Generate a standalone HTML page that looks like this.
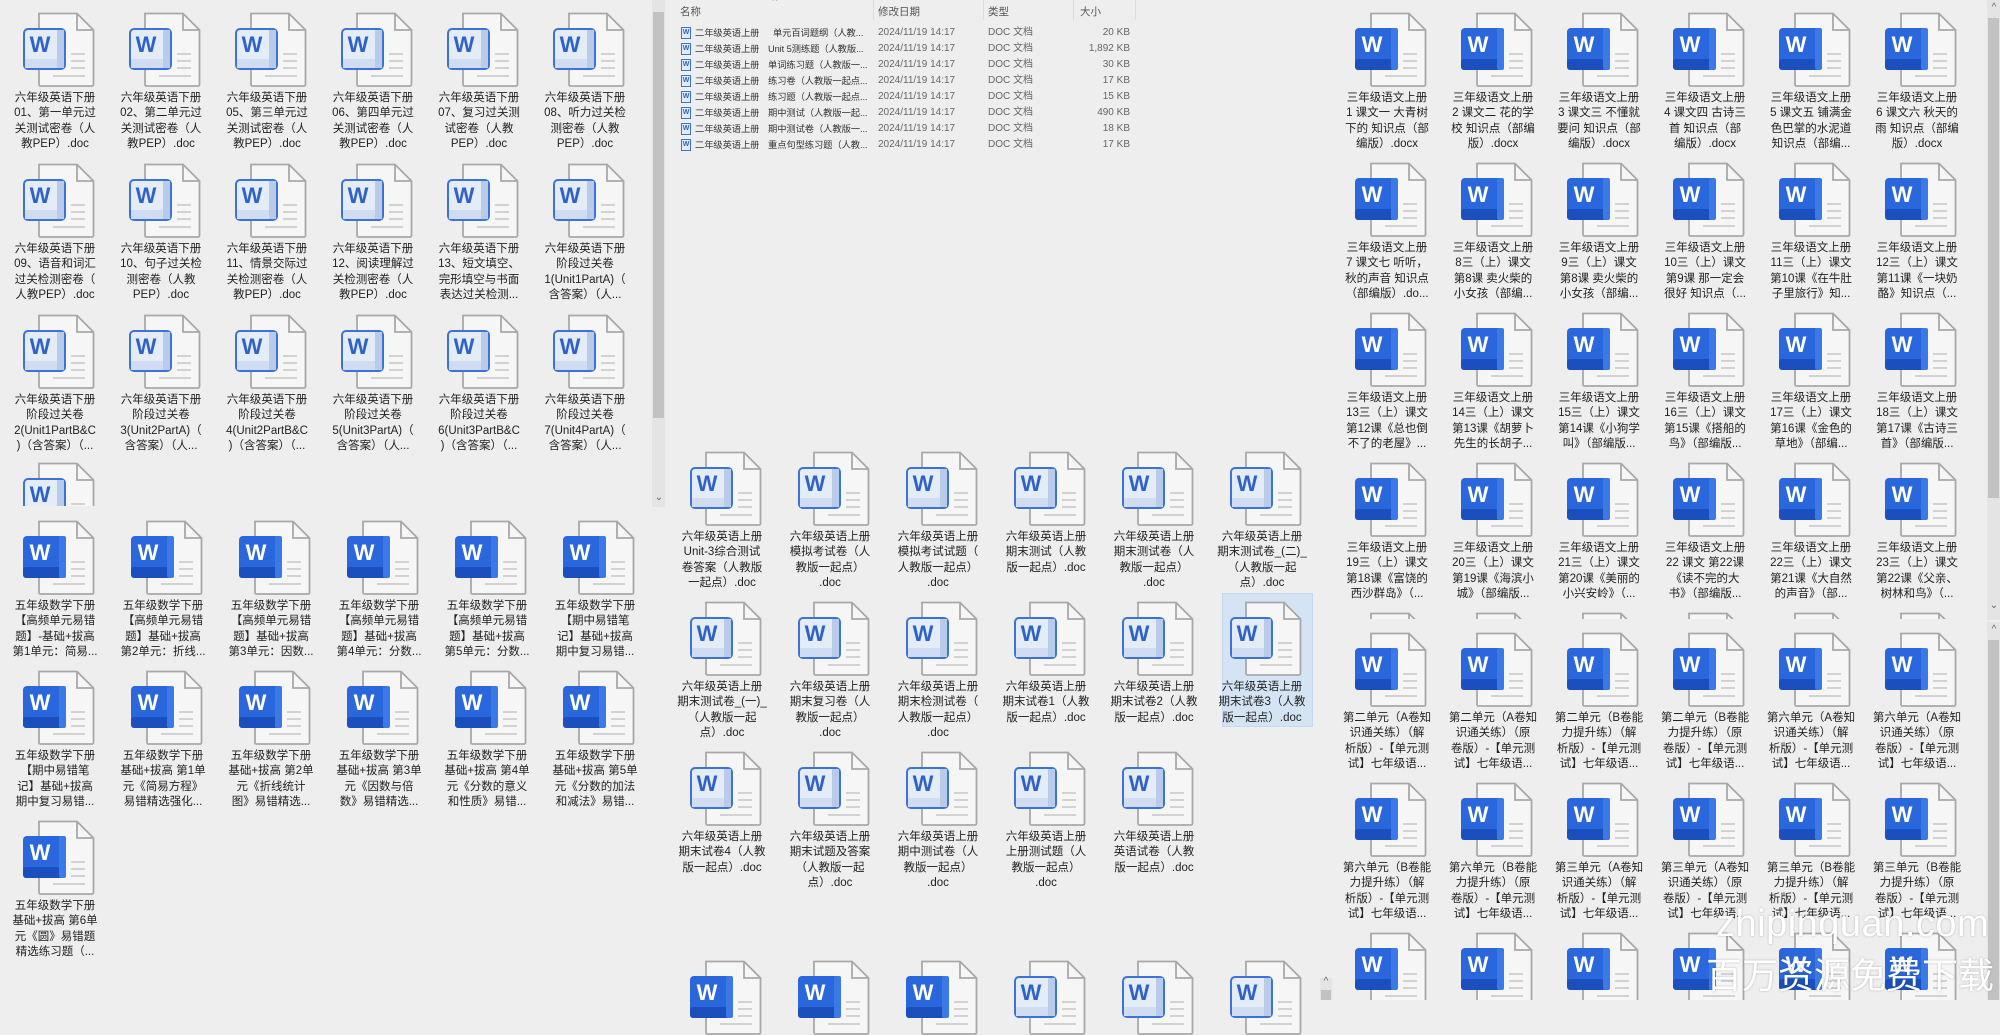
<!DOCTYPE html>
<html><head><meta charset="utf-8">
<style>
*{margin:0;padding:0;box-sizing:border-box}
body{width:2000px;height:1000px;overflow:hidden;background:#eeeeee;font-family:"Liberation Sans","Noto Sans CJK SC",sans-serif;position:relative}
.p{position:absolute;overflow:hidden;background:#eeeeee}
.it{position:absolute;width:100px;text-align:center;font-size:11.5px;line-height:15.3px;color:#222;white-space:nowrap}
.it svg{display:block;margin-left:18px;width:72px;height:75px}
.it .t{margin-top:4px}
.sb{position:absolute;background:#e4e4e4}
.th{position:absolute;background:#c2c2c2}
.ar{position:absolute;font-size:10px;color:#666;width:14px;text-align:center}
.lr{position:absolute;font-size:10px;color:#333;white-space:nowrap;height:16px;line-height:16px;overflow:hidden}
.nm{font-size:9.3px;letter-spacing:-0.1px}
.lh{position:absolute;font-size:10.5px;color:#555;top:4px}
.sel{position:absolute;background:#d4e4f4;border:1px solid #c4d8ee}
.wm{position:absolute;color:#fff;text-shadow:0 0 2px rgba(0,0,0,.25);white-space:nowrap}
.si{position:absolute;width:10px;height:12px;border:1px solid #3d72d6;background:#e2ebf8;font-size:7px;line-height:10px;text-align:center;color:#2f62c8;font-weight:bold}
</style></head><body>
<svg width="0" height="0" style="position:absolute">
<defs>
<symbol id="pg" viewBox="0 0 72 75">
<path d="M16 1.5H54L70.5 18V72.5a1.5 1.5 0 0 1-1.5 1.5H17.5a1.5 1.5 0 0 1-1.5-1.5Z" fill="#f6f6f6" stroke="#a8a8a8" stroke-width="1.8"/>
<path d="M54 1.5V18H70.5" fill="none" stroke="#a8a8a8" stroke-width="1.8"/>
<g stroke="#d2d2d2" stroke-width="2"><line x1="48" y1="42" x2="62" y2="42"/><line x1="48" y1="49" x2="62" y2="49"/><line x1="48" y1="56" x2="62" y2="56"/><line x1="30" y1="64" x2="62" y2="64"/></g>
</symbol>
<symbol id="ws" viewBox="0 0 72 75">
<use href="#pg"/>
<rect x="0" y="16" width="43" height="42" rx="4" fill="#2a67dc"/>
<rect x="0" y="47" width="43" height="11" rx="3" fill="#1b4fbd"/>
<rect x="36" y="16" width="7" height="42" rx="2" fill="#3b7ae6"/>
<text x="17" y="40" font-family="Liberation Sans" font-weight="bold" font-size="22" fill="#fff" text-anchor="middle">W</text>
</symbol>
<symbol id="wl" viewBox="0 0 72 75">
<use href="#pg"/>
<rect x="1" y="17" width="41" height="40" rx="4" fill="#e4ecf8" stroke="#3d72d6" stroke-width="2"/>
<rect x="2" y="47" width="39" height="9" fill="#cfdcf1"/>
<rect x="34" y="18" width="7" height="38" fill="#b8cbe9"/>
<text x="17" y="40" font-family="Liberation Sans" font-weight="bold" font-size="22" fill="#2f62c8" text-anchor="middle">W</text>
</symbol>
</defs></svg>

<!-- LEFT TOP PANEL -->
<div class="p" style="left:0;top:0;width:652px;height:506px">
<div class="it" style="left:5px;top:12px"><svg><use href="#wl"/></svg><div class="t">六年级英语下册<br>01、第一单元过<br>关测试密卷（人<br>教PEP）.doc</div></div>
<div class="it" style="left:111px;top:12px"><svg><use href="#wl"/></svg><div class="t">六年级英语下册<br>02、第二单元过<br>关测试密卷（人<br>教PEP）.doc</div></div>
<div class="it" style="left:217px;top:12px"><svg><use href="#wl"/></svg><div class="t">六年级英语下册<br>05、第三单元过<br>关测试密卷（人<br>教PEP）.doc</div></div>
<div class="it" style="left:323px;top:12px"><svg><use href="#wl"/></svg><div class="t">六年级英语下册<br>06、第四单元过<br>关测试密卷（人<br>教PEP）.doc</div></div>
<div class="it" style="left:429px;top:12px"><svg><use href="#wl"/></svg><div class="t">六年级英语下册<br>07、复习过关测<br>试密卷（人教<br>PEP）.doc</div></div>
<div class="it" style="left:535px;top:12px"><svg><use href="#wl"/></svg><div class="t">六年级英语下册<br>08、听力过关检<br>测密卷（人教<br>PEP）.doc</div></div>

<div class="it" style="left:5px;top:163px"><svg><use href="#wl"/></svg><div class="t">六年级英语下册<br>09、语音和词汇<br>过关检测密卷（<br>人教PEP）.doc</div></div>
<div class="it" style="left:111px;top:163px"><svg><use href="#wl"/></svg><div class="t">六年级英语下册<br>10、句子过关检<br>测密卷（人教<br>PEP）.doc</div></div>
<div class="it" style="left:217px;top:163px"><svg><use href="#wl"/></svg><div class="t">六年级英语下册<br>11、情景交际过<br>关检测密卷（人<br>教PEP）.doc</div></div>
<div class="it" style="left:323px;top:163px"><svg><use href="#wl"/></svg><div class="t">六年级英语下册<br>12、阅读理解过<br>关检测密卷（人<br>教PEP）.doc</div></div>
<div class="it" style="left:429px;top:163px"><svg><use href="#wl"/></svg><div class="t">六年级英语下册<br>13、短文填空、<br>完形填空与书面<br>表达过关检测...</div></div>
<div class="it" style="left:535px;top:163px"><svg><use href="#wl"/></svg><div class="t">六年级英语下册<br>阶段过关卷<br>1(Unit1PartA)（<br>含答案）（人...</div></div>

<div class="it" style="left:5px;top:314px"><svg><use href="#wl"/></svg><div class="t">六年级英语下册<br>阶段过关卷<br>2(Unit1PartB&amp;C<br>)（含答案）（...</div></div>
<div class="it" style="left:111px;top:314px"><svg><use href="#wl"/></svg><div class="t">六年级英语下册<br>阶段过关卷<br>3(Unit2PartA)（<br>含答案）（人...</div></div>
<div class="it" style="left:217px;top:314px"><svg><use href="#wl"/></svg><div class="t">六年级英语下册<br>阶段过关卷<br>4(Unit2PartB&amp;C<br>)（含答案）（...</div></div>
<div class="it" style="left:323px;top:314px"><svg><use href="#wl"/></svg><div class="t">六年级英语下册<br>阶段过关卷<br>5(Unit3PartA)（<br>含答案）（人...</div></div>
<div class="it" style="left:429px;top:314px"><svg><use href="#wl"/></svg><div class="t">六年级英语下册<br>阶段过关卷<br>6(Unit3PartB&amp;C<br>)（含答案）（...</div></div>
<div class="it" style="left:535px;top:314px"><svg><use href="#wl"/></svg><div class="t">六年级英语下册<br>阶段过关卷<br>7(Unit4PartA)（<br>含答案）（人...</div></div>

<div class="it" style="left:5px;top:462px"><svg><use href="#wl"/></svg></div>
</div>
<div class="sb" style="left:652px;top:0;width:13px;height:507px"></div>
<div class="th" style="left:653px;top:12px;width:11px;height:406px"></div>
<div class="ar" style="left:652px;top:492px">⌄</div>

<!-- LEFT BOTTOM PANEL -->
<div class="p" style="left:0;top:507px;width:665px;height:493px">
<div class="it" style="left:5px;top:13px"><svg><use href="#ws"/></svg><div class="t">五年级数学下册<br>【高频单元易错<br>题】-基础+拔高<br>第1单元：简易...</div></div>
<div class="it" style="left:113px;top:13px"><svg><use href="#ws"/></svg><div class="t">五年级数学下册<br>【高频单元易错<br>题】基础+拔高<br>第2单元：折线...</div></div>
<div class="it" style="left:221px;top:13px"><svg><use href="#ws"/></svg><div class="t">五年级数学下册<br>【高频单元易错<br>题】基础+拔高<br>第3单元：因数...</div></div>
<div class="it" style="left:329px;top:13px"><svg><use href="#ws"/></svg><div class="t">五年级数学下册<br>【高频单元易错<br>题】基础+拔高<br>第4单元：分数...</div></div>
<div class="it" style="left:437px;top:13px"><svg><use href="#ws"/></svg><div class="t">五年级数学下册<br>【高频单元易错<br>题】基础+拔高<br>第5单元：分数...</div></div>
<div class="it" style="left:545px;top:13px"><svg><use href="#ws"/></svg><div class="t">五年级数学下册<br>【期中易错笔<br>记】基础+拔高<br>期中复习易错...</div></div>

<div class="it" style="left:5px;top:163px"><svg><use href="#ws"/></svg><div class="t">五年级数学下册<br>【期中易错笔<br>记】基础+拔高<br>期中复习易错...</div></div>
<div class="it" style="left:113px;top:163px"><svg><use href="#ws"/></svg><div class="t">五年级数学下册<br>基础+拔高 第1单<br>元《简易方程》<br>易错精选强化...</div></div>
<div class="it" style="left:221px;top:163px"><svg><use href="#ws"/></svg><div class="t">五年级数学下册<br>基础+拔高 第2单<br>元《折线统计<br>图》易错精选...</div></div>
<div class="it" style="left:329px;top:163px"><svg><use href="#ws"/></svg><div class="t">五年级数学下册<br>基础+拔高 第3单<br>元《因数与倍<br>数》易错精选...</div></div>
<div class="it" style="left:437px;top:163px"><svg><use href="#ws"/></svg><div class="t">五年级数学下册<br>基础+拔高 第4单<br>元《分数的意义<br>和性质》易错...</div></div>
<div class="it" style="left:545px;top:163px"><svg><use href="#ws"/></svg><div class="t">五年级数学下册<br>基础+拔高 第5单<br>元《分数的加法<br>和减法》易错...</div></div>

<div class="it" style="left:5px;top:313px"><svg><use href="#ws"/></svg><div class="t">五年级数学下册<br>基础+拔高 第6单<br>元《圆》易错题<br>精选练习题（...</div></div>
</div>

<!-- MIDDLE TOP LIST -->
<div class="ar" style="left:768px;top:-4px">^</div>
<div class="lh" style="left:680px">名称</div>
<div class="lh" style="left:878px">修改日期</div>
<div class="lh" style="left:988px">类型</div>
<div class="lh" style="left:1080px">大小</div>
<div style="position:absolute;left:873px;top:0;width:1px;height:20px;background:#ddd"></div>
<div style="position:absolute;left:983px;top:0;width:1px;height:20px;background:#ddd"></div>
<div style="position:absolute;left:1073px;top:0;width:1px;height:20px;background:#ddd"></div>
<div style="position:absolute;left:1135px;top:0;width:1px;height:20px;background:#ddd"></div>

<div class="si" style="left:681px;top:27px">W</div>
<div class="si" style="left:681px;top:43px">W</div>
<div class="si" style="left:681px;top:59px">W</div>
<div class="si" style="left:681px;top:75px">W</div>
<div class="si" style="left:681px;top:91px">W</div>
<div class="si" style="left:681px;top:107px">W</div>
<div class="si" style="left:681px;top:123px">W</div>
<div class="si" style="left:681px;top:139px">W</div>
<div class="lr nm" style="left:695px;top:25px;width:68px">二年级英语上册</div>
<div class="lr nm" style="left:695px;top:41px;width:68px">二年级英语上册</div>
<div class="lr nm" style="left:695px;top:57px;width:68px">二年级英语上册</div>
<div class="lr nm" style="left:695px;top:73px;width:68px">二年级英语上册</div>
<div class="lr nm" style="left:695px;top:89px;width:68px">二年级英语上册</div>
<div class="lr nm" style="left:695px;top:105px;width:68px">二年级英语上册</div>
<div class="lr nm" style="left:695px;top:121px;width:68px">二年级英语上册</div>
<div class="lr nm" style="left:695px;top:137px;width:68px">二年级英语上册</div>
<div class="lr nm" style="left:768px;top:25px;width:102px">&nbsp;&nbsp;单元百词题纲（人教...</div>
<div class="lr nm" style="left:768px;top:41px;width:102px">Unit 5测练题（人教版...</div>
<div class="lr nm" style="left:768px;top:57px;width:102px">单词练习题（人教版一...</div>
<div class="lr nm" style="left:768px;top:73px;width:102px">练习卷（人教版一起点...</div>
<div class="lr nm" style="left:768px;top:89px;width:102px">练习题（人教版一起点...</div>
<div class="lr nm" style="left:768px;top:105px;width:102px">期中测试（人教版一起...</div>
<div class="lr nm" style="left:768px;top:121px;width:102px">期中测试卷（人教版一...</div>
<div class="lr nm" style="left:768px;top:137px;width:102px">重点句型练习题（人教...</div>
<div class="lr" style="left:878px;top:25px;color:#666">2024/11/19 14:17</div>
<div class="lr" style="left:878px;top:41px;color:#666">2024/11/19 14:17</div>
<div class="lr" style="left:878px;top:57px;color:#666">2024/11/19 14:17</div>
<div class="lr" style="left:878px;top:73px;color:#666">2024/11/19 14:17</div>
<div class="lr" style="left:878px;top:89px;color:#666">2024/11/19 14:17</div>
<div class="lr" style="left:878px;top:105px;color:#666">2024/11/19 14:17</div>
<div class="lr" style="left:878px;top:121px;color:#666">2024/11/19 14:17</div>
<div class="lr" style="left:878px;top:137px;color:#666">2024/11/19 14:17</div>
<div class="lr" style="left:988px;top:25px;color:#666">DOC 文档</div>
<div class="lr" style="left:988px;top:41px;color:#666">DOC 文档</div>
<div class="lr" style="left:988px;top:57px;color:#666">DOC 文档</div>
<div class="lr" style="left:988px;top:73px;color:#666">DOC 文档</div>
<div class="lr" style="left:988px;top:89px;color:#666">DOC 文档</div>
<div class="lr" style="left:988px;top:105px;color:#666">DOC 文档</div>
<div class="lr" style="left:988px;top:121px;color:#666">DOC 文档</div>
<div class="lr" style="left:988px;top:137px;color:#666">DOC 文档</div>
<div class="lr" style="left:1060px;width:70px;text-align:right;top:25px;color:#666">20 KB</div>
<div class="lr" style="left:1060px;width:70px;text-align:right;top:41px;color:#666">1,892 KB</div>
<div class="lr" style="left:1060px;width:70px;text-align:right;top:57px;color:#666">30 KB</div>
<div class="lr" style="left:1060px;width:70px;text-align:right;top:73px;color:#666">17 KB</div>
<div class="lr" style="left:1060px;width:70px;text-align:right;top:89px;color:#666">15 KB</div>
<div class="lr" style="left:1060px;width:70px;text-align:right;top:105px;color:#666">490 KB</div>
<div class="lr" style="left:1060px;width:70px;text-align:right;top:121px;color:#666">18 KB</div>
<div class="lr" style="left:1060px;width:70px;text-align:right;top:137px;color:#666">17 KB</div>

<!-- MIDDLE BOTTOM GRID -->
<div class="sel" style="left:1222px;top:593px;width:91px;height:134px"></div>
<div class="it" style="left:672px;top:451px"><svg><use href="#wl"/></svg><div class="t">六年级英语上册<br>Unit-3综合测试<br>卷答案（人教版<br>一起点）.doc</div></div>
<div class="it" style="left:780px;top:451px"><svg><use href="#wl"/></svg><div class="t">六年级英语上册<br>模拟考试卷（人<br>教版一起点）<br>.doc</div></div>
<div class="it" style="left:888px;top:451px"><svg><use href="#wl"/></svg><div class="t">六年级英语上册<br>模拟考试试题（<br>人教版一起点）<br>.doc</div></div>
<div class="it" style="left:996px;top:451px"><svg><use href="#wl"/></svg><div class="t">六年级英语上册<br>期末测试（人教<br>版一起点）.doc</div></div>
<div class="it" style="left:1104px;top:451px"><svg><use href="#wl"/></svg><div class="t">六年级英语上册<br>期末测试卷（人<br>教版一起点）<br>.doc</div></div>
<div class="it" style="left:1212px;top:451px"><svg><use href="#wl"/></svg><div class="t">六年级英语上册<br>期末测试卷_(二)_<br>（人教版一起<br>点）.doc</div></div>

<div class="it" style="left:672px;top:601px"><svg><use href="#wl"/></svg><div class="t">六年级英语上册<br>期末测试卷_(一)_<br>（人教版一起<br>点）.doc</div></div>
<div class="it" style="left:780px;top:601px"><svg><use href="#wl"/></svg><div class="t">六年级英语上册<br>期末复习卷（人<br>教版一起点）<br>.doc</div></div>
<div class="it" style="left:888px;top:601px"><svg><use href="#wl"/></svg><div class="t">六年级英语上册<br>期末检测试卷（<br>人教版一起点）<br>.doc</div></div>
<div class="it" style="left:996px;top:601px"><svg><use href="#wl"/></svg><div class="t">六年级英语上册<br>期末试卷1（人教<br>版一起点）.doc</div></div>
<div class="it" style="left:1104px;top:601px"><svg><use href="#wl"/></svg><div class="t">六年级英语上册<br>期末试卷2（人教<br>版一起点）.doc</div></div>
<div class="it" style="left:1212px;top:601px"><svg><use href="#wl"/></svg><div class="t">六年级英语上册<br>期末试卷3（人教<br>版一起点）.doc</div></div>

<div class="it" style="left:672px;top:751px"><svg><use href="#wl"/></svg><div class="t">六年级英语上册<br>期末试卷4（人教<br>版一起点）.doc</div></div>
<div class="it" style="left:780px;top:751px"><svg><use href="#wl"/></svg><div class="t">六年级英语上册<br>期末试题及答案<br>（人教版一起<br>点）.doc</div></div>
<div class="it" style="left:888px;top:751px"><svg><use href="#wl"/></svg><div class="t">六年级英语上册<br>期中测试卷（人<br>教版一起点）<br>.doc</div></div>
<div class="it" style="left:996px;top:751px"><svg><use href="#wl"/></svg><div class="t">六年级英语上册<br>上册测试题（人<br>教版一起点）<br>.doc</div></div>
<div class="it" style="left:1104px;top:751px"><svg><use href="#wl"/></svg><div class="t">六年级英语上册<br>英语试卷（人教<br>版一起点）.doc</div></div>

<div class="it" style="left:672px;top:960px"><svg><use href="#ws"/></svg></div>
<div class="it" style="left:780px;top:960px"><svg><use href="#ws"/></svg></div>
<div class="it" style="left:888px;top:960px"><svg><use href="#ws"/></svg></div>
<div class="it" style="left:996px;top:960px"><svg><use href="#wl"/></svg></div>
<div class="it" style="left:1104px;top:960px"><svg><use href="#wl"/></svg></div>
<div class="it" style="left:1212px;top:960px"><svg><use href="#wl"/></svg></div>
<div class="sb" style="left:1320px;top:978px;width:12px;height:22px"></div>
<div class="th" style="left:1321px;top:990px;width:10px;height:10px"></div>
<div class="ar" style="left:1319px;top:976px">^</div>

<!-- RIGHT TOP PANEL -->
<div class="p" style="left:1337px;top:0;width:650px;height:619px">
<div class="it" style="left:0px;top:12px"><svg><use href="#ws"/></svg><div class="t">三年级语文上册<br>1 课文一 大青树<br>下的 知识点（部<br>编版）.docx</div></div>
<div class="it" style="left:106px;top:12px"><svg><use href="#ws"/></svg><div class="t">三年级语文上册<br>2 课文二 花的学<br>校 知识点（部编<br>版）.docx</div></div>
<div class="it" style="left:212px;top:12px"><svg><use href="#ws"/></svg><div class="t">三年级语文上册<br>3 课文三 不懂就<br>要问 知识点（部<br>编版）.docx</div></div>
<div class="it" style="left:318px;top:12px"><svg><use href="#ws"/></svg><div class="t">三年级语文上册<br>4 课文四 古诗三<br>首 知识点（部<br>编版）.docx</div></div>
<div class="it" style="left:424px;top:12px"><svg><use href="#ws"/></svg><div class="t">三年级语文上册<br>5 课文五 铺满金<br>色巴掌的水泥道<br>知识点（部编...</div></div>
<div class="it" style="left:530px;top:12px"><svg><use href="#ws"/></svg><div class="t">三年级语文上册<br>6 课文六 秋天的<br>雨 知识点（部编<br>版）.docx</div></div>

<div class="it" style="left:0px;top:162px"><svg><use href="#ws"/></svg><div class="t">三年级语文上册<br>7 课文七 听听，<br>秋的声音 知识点<br>（部编版）.do...</div></div>
<div class="it" style="left:106px;top:162px"><svg><use href="#ws"/></svg><div class="t">三年级语文上册<br>8三（上）课文<br>第8课 卖火柴的<br>小女孩（部编...</div></div>
<div class="it" style="left:212px;top:162px"><svg><use href="#ws"/></svg><div class="t">三年级语文上册<br>9三（上）课文<br>第8课 卖火柴的<br>小女孩（部编...</div></div>
<div class="it" style="left:318px;top:162px"><svg><use href="#ws"/></svg><div class="t">三年级语文上册<br>10三（上）课文<br>第9课 那一定会<br>很好 知识点（...</div></div>
<div class="it" style="left:424px;top:162px"><svg><use href="#ws"/></svg><div class="t">三年级语文上册<br>11三（上）课文<br>第10课《在牛肚<br>子里旅行》知...</div></div>
<div class="it" style="left:530px;top:162px"><svg><use href="#ws"/></svg><div class="t">三年级语文上册<br>12三（上）课文<br>第11课《一块奶<br>酪》知识点（...</div></div>

<div class="it" style="left:0px;top:312px"><svg><use href="#ws"/></svg><div class="t">三年级语文上册<br>13三（上）课文<br>第12课《总也倒<br>不了的老屋》...</div></div>
<div class="it" style="left:106px;top:312px"><svg><use href="#ws"/></svg><div class="t">三年级语文上册<br>14三（上）课文<br>第13课《胡萝卜<br>先生的长胡子...</div></div>
<div class="it" style="left:212px;top:312px"><svg><use href="#ws"/></svg><div class="t">三年级语文上册<br>15三（上）课文<br>第14课《小狗学<br>叫》（部编版...</div></div>
<div class="it" style="left:318px;top:312px"><svg><use href="#ws"/></svg><div class="t">三年级语文上册<br>16三（上）课文<br>第15课《搭船的<br>鸟》（部编版...</div></div>
<div class="it" style="left:424px;top:312px"><svg><use href="#ws"/></svg><div class="t">三年级语文上册<br>17三（上）课文<br>第16课《金色的<br>草地》（部编...</div></div>
<div class="it" style="left:530px;top:312px"><svg><use href="#ws"/></svg><div class="t">三年级语文上册<br>18三（上）课文<br>第17课《古诗三<br>首》（部编版...</div></div>

<div class="it" style="left:0px;top:462px"><svg><use href="#ws"/></svg><div class="t">三年级语文上册<br>19三（上）课文<br>第18课《富饶的<br>西沙群岛》（...</div></div>
<div class="it" style="left:106px;top:462px"><svg><use href="#ws"/></svg><div class="t">三年级语文上册<br>20三（上）课文<br>第19课《海滨小<br>城》（部编版...</div></div>
<div class="it" style="left:212px;top:462px"><svg><use href="#ws"/></svg><div class="t">三年级语文上册<br>21三（上）课文<br>第20课《美丽的<br>小兴安岭》（...</div></div>
<div class="it" style="left:318px;top:462px"><svg><use href="#ws"/></svg><div class="t">三年级语文上册<br>22 课文 第22课<br>《读不完的大<br>书》（部编版...</div></div>
<div class="it" style="left:424px;top:462px"><svg><use href="#ws"/></svg><div class="t">三年级语文上册<br>22三（上）课文<br>第21课《大自然<br>的声音》（部...</div></div>
<div class="it" style="left:530px;top:462px"><svg><use href="#ws"/></svg><div class="t">三年级语文上册<br>23三（上）课文<br>第22课《父亲、<br>树林和鸟》（...</div></div>

<div class="it" style="left:0px;top:612px"><svg><use href="#ws"/></svg></div>
<div class="it" style="left:106px;top:612px"><svg><use href="#ws"/></svg></div>
<div class="it" style="left:212px;top:612px"><svg><use href="#ws"/></svg></div>
<div class="it" style="left:318px;top:612px"><svg><use href="#ws"/></svg></div>
<div class="it" style="left:424px;top:612px"><svg><use href="#ws"/></svg></div>
<div class="it" style="left:530px;top:612px"><svg><use href="#ws"/></svg></div>
</div>
<div class="sb" style="left:1987px;top:0;width:13px;height:620px"></div>
<div class="th" style="left:1988px;top:18px;width:11px;height:480px"></div>
<div class="ar" style="left:1987px;top:2px">^</div>
<div class="ar" style="left:1987px;top:600px">⌄</div>

<!-- RIGHT BOTTOM PANEL -->
<div class="p" style="left:1337px;top:622px;width:650px;height:378px">
<div class="it" style="left:0px;top:10px"><svg><use href="#ws"/></svg><div class="t">第二单元（A卷知<br>识通关练）（解<br>析版）-【单元测<br>试】七年级语...</div></div>
<div class="it" style="left:106px;top:10px"><svg><use href="#ws"/></svg><div class="t">第二单元（A卷知<br>识通关练）（原<br>卷版）-【单元测<br>试】七年级语...</div></div>
<div class="it" style="left:212px;top:10px"><svg><use href="#ws"/></svg><div class="t">第二单元（B卷能<br>力提升练）（解<br>析版）-【单元测<br>试】七年级语...</div></div>
<div class="it" style="left:318px;top:10px"><svg><use href="#ws"/></svg><div class="t">第二单元（B卷能<br>力提升练）（原<br>卷版）-【单元测<br>试】七年级语...</div></div>
<div class="it" style="left:424px;top:10px"><svg><use href="#ws"/></svg><div class="t">第六单元（A卷知<br>识通关练）（解<br>析版）-【单元测<br>试】七年级语...</div></div>
<div class="it" style="left:530px;top:10px"><svg><use href="#ws"/></svg><div class="t">第六单元（A卷知<br>识通关练）（原<br>卷版）-【单元测<br>试】七年级语...</div></div>

<div class="it" style="left:0px;top:160px"><svg><use href="#ws"/></svg><div class="t">第六单元（B卷能<br>力提升练）（解<br>析版）-【单元测<br>试】七年级语...</div></div>
<div class="it" style="left:106px;top:160px"><svg><use href="#ws"/></svg><div class="t">第六单元（B卷能<br>力提升练）（原<br>卷版）-【单元测<br>试】七年级语...</div></div>
<div class="it" style="left:212px;top:160px"><svg><use href="#ws"/></svg><div class="t">第三单元（A卷知<br>识通关练）（解<br>析版）-【单元测<br>试】七年级语...</div></div>
<div class="it" style="left:318px;top:160px"><svg><use href="#ws"/></svg><div class="t">第三单元（A卷知<br>识通关练）（原<br>卷版）-【单元测<br>试】七年级语..</div></div>
<div class="it" style="left:424px;top:160px"><svg><use href="#ws"/></svg><div class="t">第三单元（B卷能<br>力提升练）（解<br>析版）-【单元测<br>试】七年级语...</div></div>
<div class="it" style="left:530px;top:160px"><svg><use href="#ws"/></svg><div class="t">第三单元（B卷能<br>力提升练）（原<br>卷版）-【单元测<br>试】七年级语...</div></div>

<div class="it" style="left:0px;top:310px"><svg><use href="#ws"/></svg></div>
<div class="it" style="left:106px;top:310px"><svg><use href="#ws"/></svg></div>
<div class="it" style="left:212px;top:310px"><svg><use href="#ws"/></svg></div>
<div class="it" style="left:318px;top:310px"><svg><use href="#ws"/></svg></div>
<div class="it" style="left:424px;top:310px"><svg><use href="#ws"/></svg></div>
<div class="it" style="left:530px;top:310px"><svg><use href="#ws"/></svg></div>
</div>
<div class="sb" style="left:1987px;top:622px;width:13px;height:378px"></div>
<div class="th" style="left:1988px;top:640px;width:11px;height:360px"></div>
<div class="ar" style="left:1987px;top:624px">^</div>

<!-- WATERMARK -->
<div class="wm" style="left:1716px;top:903px;font-size:38px;letter-spacing:0.5px">zhipinquan.com</div>
<div class="wm" style="left:1706px;top:950px;font-size:36px;font-family:'Noto Sans CJK SC',sans-serif;line-height:46px">百万资源免费下载</div>
</body></html>
